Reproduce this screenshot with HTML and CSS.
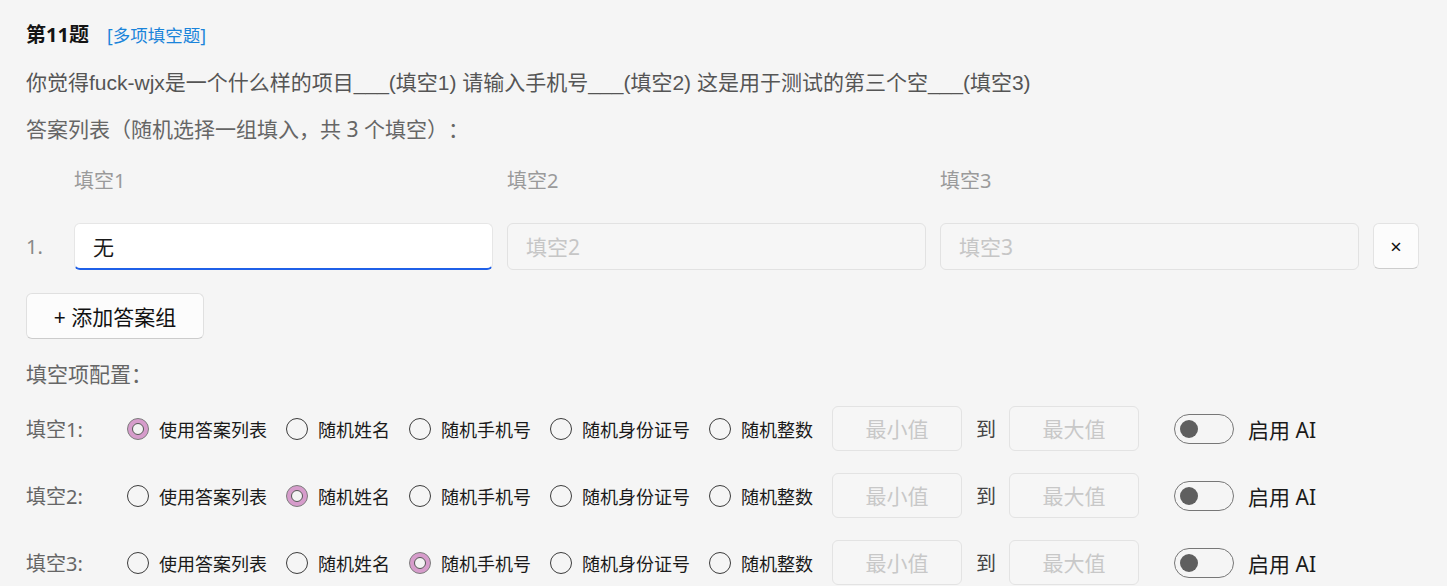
FILE: index.html
```html
<!DOCTYPE html>
<html lang="zh-CN">
<head>
<meta charset="utf-8">
<title>第11题</title>
<link rel="stylesheet" href="styles.css">
</head>
<body>
<div class="page">
  <div class="title-row">
    <span class="q-no">第11题</span>
    <span class="q-type">[多项填空题]</span>
  </div>
  <p class="q-text">你觉得fuck-wjx是一个什么样的项目___(填空1) 请输入手机号___(填空2) 这是用于测试的第三个空___(填空3)</p>
  <p class="section-label">答案列表（随机选择一组填入，共 3 个填空）：</p>

  <div class="answer-grid">
    <span></span>
    <span class="col-head">填空1</span>
    <span class="col-head">填空2</span>
    <span class="col-head">填空3</span>
    <span></span>

    <span class="row-no">1.</span>
    <input class="text-input focused" type="text" value="无">
    <input class="text-input" type="text" placeholder="填空2">
    <input class="text-input" type="text" placeholder="填空3">
    <button class="del-btn" type="button">×</button>
  </div>

  <button class="add-btn" type="button">+ 添加答案组</button>

  <p class="section-label config-title">填空项配置：</p>

  <div class="config-list">
    <div class="config-row">
      <span class="cfg-label">填空1:</span>
      <label class="radio-item"><span class="radio checked"></span><span>使用答案列表</span></label>
      <label class="radio-item"><span class="radio"></span><span>随机姓名</span></label>
      <label class="radio-item"><span class="radio"></span><span>随机手机号</span></label>
      <label class="radio-item"><span class="radio"></span><span>随机身份证号</span></label>
      <label class="radio-item"><span class="radio"></span><span>随机整数</span></label>
      <input class="range-input" type="text" placeholder="最小值">
      <span class="to">到</span>
      <input class="range-input" type="text" placeholder="最大值">
      <span class="switch"><span class="knob"></span></span>
      <span class="switch-label">启用 AI</span>
    </div>
    <div class="config-row">
      <span class="cfg-label">填空2:</span>
      <label class="radio-item"><span class="radio"></span><span>使用答案列表</span></label>
      <label class="radio-item"><span class="radio checked"></span><span>随机姓名</span></label>
      <label class="radio-item"><span class="radio"></span><span>随机手机号</span></label>
      <label class="radio-item"><span class="radio"></span><span>随机身份证号</span></label>
      <label class="radio-item"><span class="radio"></span><span>随机整数</span></label>
      <input class="range-input" type="text" placeholder="最小值">
      <span class="to">到</span>
      <input class="range-input" type="text" placeholder="最大值">
      <span class="switch"><span class="knob"></span></span>
      <span class="switch-label">启用 AI</span>
    </div>
    <div class="config-row">
      <span class="cfg-label">填空3:</span>
      <label class="radio-item"><span class="radio"></span><span>使用答案列表</span></label>
      <label class="radio-item"><span class="radio"></span><span>随机姓名</span></label>
      <label class="radio-item"><span class="radio checked"></span><span>随机手机号</span></label>
      <label class="radio-item"><span class="radio"></span><span>随机身份证号</span></label>
      <label class="radio-item"><span class="radio"></span><span>随机整数</span></label>
      <input class="range-input" type="text" placeholder="最小值">
      <span class="to">到</span>
      <input class="range-input" type="text" placeholder="最大值">
      <span class="switch"><span class="knob"></span></span>
      <span class="switch-label">启用 AI</span>
    </div>
  </div>
</div>
</body>
</html>
```

FILE: styles.css
```css
* {
  box-sizing: border-box;
}

html, body {
  margin: 0;
  background: #f5f5f5;
}

body {
  font-family: "Noto Sans", "Noto Sans CJK SC", sans-serif;
  color: #1a1a1a;
  overflow: hidden;
  text-spacing-trim: space-all;
}

.page {
  padding: 20px 28px 0 26px;
}

.title-row {
  display: flex;
  align-items: baseline;
  gap: 18px;
  height: 30px;
  line-height: 30px;
}

.q-no {
  font-size: 20px;
  font-weight: 700;
  color: #141414;
}

.q-type {
  font-size: 17.5px;
  color: #1a84da;
}

.q-text {
  margin: 18px 0 0;
  font-family: "Liberation Sans", "Noto Sans CJK SC", sans-serif;
  font-size: 21px;
  line-height: 30px;
  color: #555555;
  white-space: nowrap;
}

.section-label {
  margin: 16px 0 0;
  font-size: 21px;
  line-height: 30px;
  color: #666666;
}

.answer-grid {
  margin-top: 22px;
  display: grid;
  grid-template-columns: 34px repeat(3, 1fr) 46px;
  column-gap: 14px;
  row-gap: 27px;
  align-items: center;
}

.col-head {
  font-size: 20px;
  line-height: 30px;
  color: #9a9a9a;
}

.row-no {
  font-size: 20px;
  color: #888888;
}

.text-input {
  height: 47px;
  width: 100%;
  border: 1px solid #e2e2e2;
  border-radius: 6px;
  background: #f6f6f6;
  padding: 0 18px;
  font-family: inherit;
  font-size: 21px;
  color: #1a1a1a;
  outline: none;
}

.text-input::placeholder {
  color: #c6c6c6;
}

.text-input.focused {
  background: #ffffff;
  border-color: #e6e6e6;
  border-bottom: 2px solid #1f60e8;
}

.del-btn {
  align-self: start;
  height: 46px;
  width: 46px;
  padding: 0;
  border: 1px solid #e3e3e3;
  border-bottom-color: #cdcdcd;
  border-radius: 6px;
  background: #fcfcfc;
  font-family: inherit;
  font-size: 20px;
  color: #111111;
}

.add-btn {
  display: block;
  margin-top: 23px;
  width: 178px;
  height: 46px;
  padding: 0;
  border: 1px solid #e0e0e0;
  border-bottom-color: #cccccc;
  border-radius: 6px;
  background: #fcfcfc;
  font-family: inherit;
  font-size: 21px;
  color: #111111;
}

.config-title {
  margin-top: 20px;
}

.config-list {
  margin-top: 17px;
  display: flex;
  flex-direction: column;
  gap: 22px;
}

.config-row {
  display: flex;
  align-items: center;
  height: 45px;
}

.cfg-label {
  width: 101px;
  font-size: 20px;
  color: #666666;
}

.radio-item {
  display: flex;
  align-items: center;
  gap: 10px;
  margin-right: 19px;
  font-size: 18px;
  color: #1a1a1a;
}

.radio {
  width: 22px;
  height: 22px;
  border-radius: 50%;
  border: 1.5px solid #3c3c3c;
  background: #f5f5f5;
  display: flex;
  align-items: center;
  justify-content: center;
}

.radio.checked {
  border: 1px solid #7d7d7d;
  background: #d69ccb;
}

.radio.checked::after {
  content: "";
  width: 10px;
  height: 10px;
  border-radius: 50%;
  border: 1.5px solid #555555;
  background: #f3f3f3;
}

.range-input {
  width: 130px;
  height: 45px;
  border: 1px solid #e3e3e3;
  border-radius: 6px;
  background: #f6f6f6;
  text-align: center;
  font-family: inherit;
  font-size: 21px;
  outline: none;
}

.range-input::placeholder {
  color: #c8c8c8;
}

.to {
  margin: 0 13px 0 14px;
  font-size: 20px;
  color: #444444;
}

.switch {
  margin-left: 35px;
  width: 60px;
  height: 30px;
  border: 1.5px solid #777777;
  border-radius: 15px;
  display: flex;
  align-items: center;
  padding-left: 5px;
}

.knob {
  width: 18px;
  height: 18px;
  border-radius: 50%;
  background: #5f5f5f;
}

.switch-label {
  margin-left: 14px;
  font-size: 21px;
  color: #1a1a1a;
}
```
